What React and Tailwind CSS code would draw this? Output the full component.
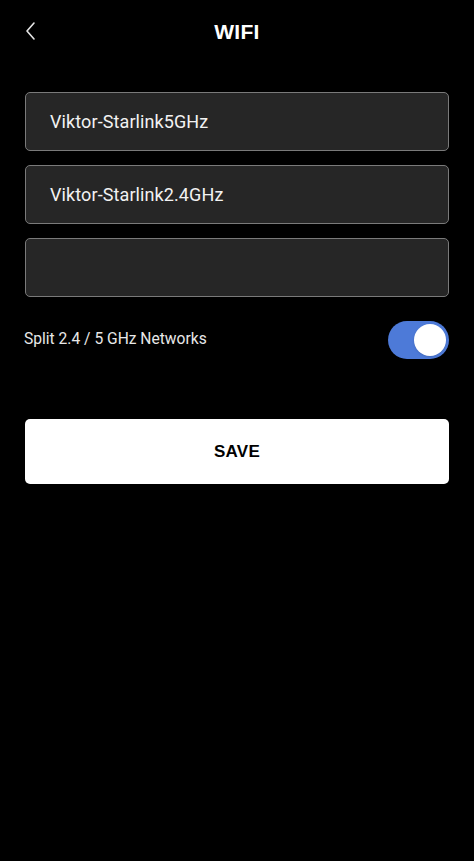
import React, { useState } from 'react';

const NetworkField = ({ value }) => (
  <div className="h-[59px] w-full rounded-[5px] border border-[#7a7a7a] bg-[#262626] flex items-center px-[24px]">
    <span className="text-[18px] text-[#f2f2f2] tracking-[0.1px]">{value}</span>
  </div>
);

export default function App() {
  const [split, setSplit] = useState(true);

  return (
    <div className="w-full min-h-[861px] bg-black text-white" style={{ fontFamily: 'Roboto, "Noto Sans", sans-serif' }}>
      {/* Header */}
      <div className="relative h-[62px] flex items-center justify-center">
        <button className="absolute left-[24px] top-[21px] text-[#e5e5e5]">
          <svg width="14" height="20" viewBox="0 0 14 20" fill="none" stroke="currentColor" strokeWidth="1.6" strokeLinecap="round" strokeLinejoin="round">
            <path d="M10 2L3 10l7 8" />
          </svg>
        </button>
        <h1 className="text-[21px] font-bold tracking-[0.3px] mt-[1px]" style={{ fontFamily: '"Liberation Sans", Arial, sans-serif' }}>WIFI</h1>
      </div>

      <div className="px-[25px] pt-[30px] flex flex-col">
        <div className="flex flex-col gap-[14px]">
          <NetworkField value="Viktor-Starlink5GHz" />
          <NetworkField value="Viktor-Starlink2.4GHz" />
          <NetworkField value="" />
        </div>

        {/* Split toggle */}
        <div className="mt-[24px] flex items-center justify-between">
          <span className="text-[15.6px] text-[#e8e8e8] -ml-[1px]">Split 2.4 / 5 GHz Networks</span>
          <button
            onClick={() => setSplit(!split)}
            className={`w-[61px] h-[38px] rounded-full flex items-center px-[3px] ${split ? 'bg-[#4d7ad8] justify-end' : 'bg-[#3a3a3a] justify-start'}`}
          >
            <span className="w-[32px] h-[32px] rounded-full bg-white shadow" />
          </button>
        </div>

        <button className="mt-[60px] h-[65px] w-full rounded-[5px] bg-white text-black text-[17px] font-bold tracking-[0.3px] pt-[1px]" style={{ fontFamily: '"Liberation Sans", Arial, sans-serif' }}>
          SAVE
        </button>
      </div>
    </div>
  );
}
